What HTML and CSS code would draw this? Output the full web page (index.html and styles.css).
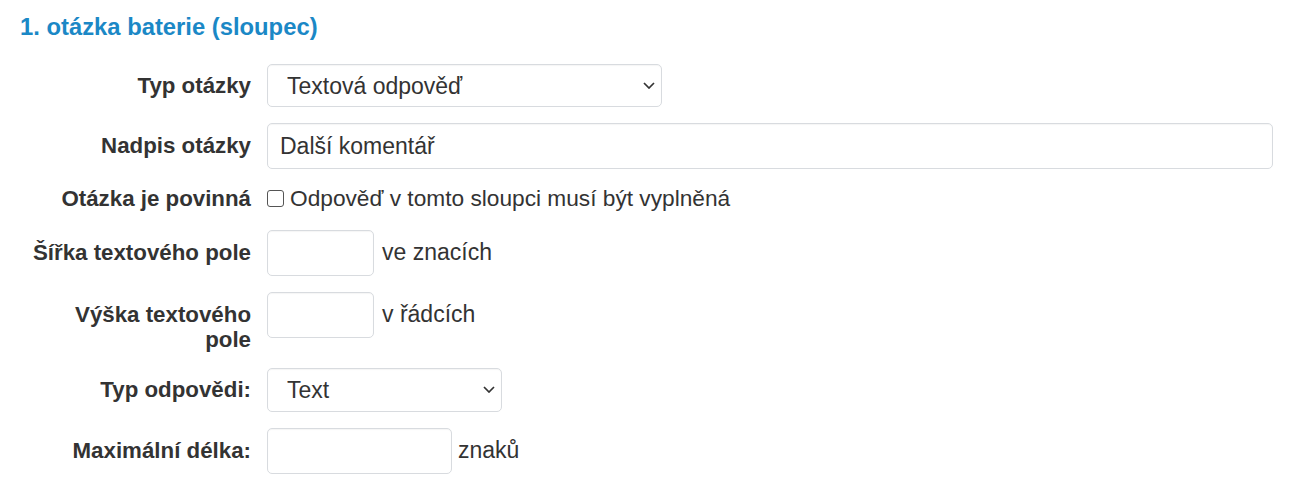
FILE: index.html
```html
<!DOCTYPE html>
<html lang="cs">
    <head>
        <meta charset="UTF-8">
        <title>Otázka baterie</title>
        <link rel="stylesheet" href="styles.css">
    </head>

    <body>
        <h2 class="question-title">1. otázka baterie (sloupec)</h2>

        <form class="form">
            <div class="row">
                <label class="label label-select" for="typ">Typ otázky</label>
                <div class="select-wrap select-type">
                    <select class="select" id="typ">
                        <option>Textová odpověď</option>
                    </select>
                    <svg class="chevron" width="12" height="7" viewBox="0 0 12 7"><path d="M1 1 L6 6 L11 1" fill="none" stroke="#333" stroke-width="1.7"/></svg>
                </div>
            </div>

            <div class="row">
                <label class="label" for="nadpis">Nadpis otázky</label>
                <input class="input input-full" id="nadpis" type="text" value="Další komentář">
            </div>

            <div class="row row-check">
                <label class="label label-check" for="povinna">Otázka je povinná</label>
                <div class="check">
                    <input class="checkbox" id="povinna" type="checkbox">
                    <span>Odpověď v tomto sloupci musí být vyplněná</span>
                </div>
            </div>

            <div class="row">
                <label class="label" for="sirka">Šířka textového pole</label>
                <div class="inline">
                    <input class="input input-small" id="sirka" type="text">
                    <span class="suffix">ve znacích</span>
                </div>
            </div>

            <div class="row">
                <label class="label" for="vyska">Výška textového pole</label>
                <div class="inline">
                    <input class="input input-small" id="vyska" type="text">
                    <span class="suffix">v řádcích</span>
                </div>
            </div>

            <div class="row">
                <label class="label label-select" for="odpoved">Typ odpovědi:</label>
                <div class="select-wrap select-answer">
                    <select class="select" id="odpoved">
                        <option>Text</option>
                    </select>
                    <svg class="chevron" width="12" height="7" viewBox="0 0 12 7"><path d="M1 1 L6 6 L11 1" fill="none" stroke="#333" stroke-width="1.7"/></svg>
                </div>
            </div>

            <div class="row">
                <label class="label" for="delka">Maximální délka:</label>
                <div class="inline">
                    <input class="input input-medium" id="delka" type="text">
                    <span class="suffix suffix-tight">znaků</span>
                </div>
            </div>
        </form>
    </body>
</html>
```

FILE: styles.css
```css
body{
    margin: 0;
    background-color: #fff;
    color: #333;
    font-family: "Liberation Sans", Arial, sans-serif;
    font-size: 23px;
    line-height: 25px;
}

.question-title{
    margin: 14px 0 24px 20px;
    font-size: 23.8px;
    line-height: 26px;
    font-weight: bold;
    color: #1b88c6;
}

.form{
    padding: 0 23px 0 20px;
}

.row{
    display: flex;
    align-items: flex-start;
    gap: 16px;
    margin-bottom: 16px;
}

.label{
    flex: none;
    box-sizing: border-box;
    width: 231px;
    padding: 10px 0 0 9px;
    text-align: right;
    font-size: 22.3px;
    font-weight: bold;
    color: #333;
}

.label-select{
    padding-top: 9px;
}

.row-check{
    min-height: 29px;
}

.label-check{
    padding-top: 1px;
}

/* pole formuláře */
.input, .select{
    box-sizing: border-box;
    margin: 0;
    border: 1px solid #d8dbdf;
    border-radius: 5px;
    background-color: #fff;
    box-shadow: inset 0 1px 1px rgba(0,0,0,.04);
    font-family: inherit;
    font-size: 23px;
    color: #333;
    outline: none;
}

.input{
    height: 46px;
    padding: 0 12px;
}

.input-full{
    flex: 1;
    min-width: 0;
}

.input-small{
    width: 107px;
}

.input-medium{
    width: 185px;
}

.select-wrap{
    position: relative;
}

.select{
    display: block;
    width: 100%;
    height: 43px;
    padding: 0 30px 0 19px;
    appearance: none;
    -webkit-appearance: none;
}

.select-type{
    width: 395px;
}

.select-answer{
    width: 235px;
}

.select-answer .select{
    height: 44px;
}

.chevron{
    position: absolute;
    right: 7px;
    top: 50%;
    margin-top: -4px;
    pointer-events: none;
}

.check{
    display: flex;
    align-items: center;
    padding-top: 1px;
    font-size: 22.7px;
}

.checkbox{
    box-sizing: border-box;
    width: 17px;
    height: 17px;
    margin: 0 6px 0 0;
    border: 1px solid #555;
    border-radius: 3px;
    background-color: #fff;
    appearance: none;
    -webkit-appearance: none;
}

.inline{
    display: flex;
    align-items: center;
    height: 46px;
}

.suffix{
    margin-left: 8px;
    margin-top: -2px;
}

.suffix-tight{
    margin-left: 6px;
}
```
